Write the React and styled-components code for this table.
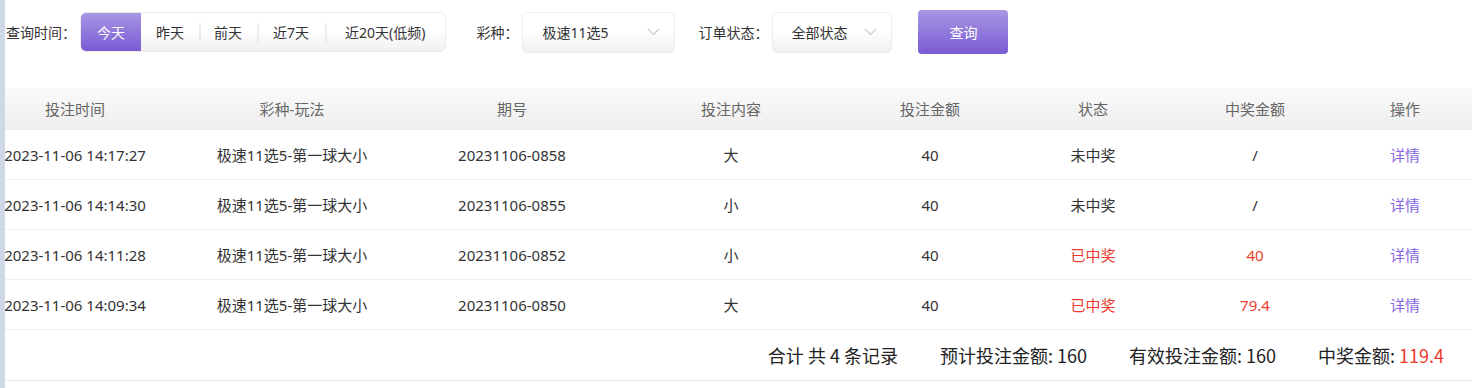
import React from 'react'
import styled, { createGlobalStyle } from 'styled-components';

const GlobalStyle = createGlobalStyle`
    html, body {
        margin: 0;
        padding: 0;
        background: #fff;
    }
    body {
        font-family: 'Noto Sans', 'Noto Sans CJK SC', sans-serif;
        font-size: 14px;
        color: #333;
    }
`;

const purple = 'linear-gradient(180deg, #a796e3 0%, #7a5bd4 100%)';
const soft = 'linear-gradient(180deg, #ffffff 0%, #ffffff 45%, #f0f0f0 100%)';
const red = '#ec3b2e';

const Page = styled.div`
    display: flex;
    height: 388px;
    overflow: hidden;
`;

const Rail = styled.div`
    flex: 0 0 5px;
    background: #cfd8e6;
`;

const Main = styled.div`
    flex: 1;
    min-width: 0;
    overflow: hidden;
`;

const FilterBar = styled.div`
    display: flex;
    align-items: center;
    height: 64px;
    padding-left: 1px;
    font-size: 14px;
`;

const Label = styled.span`
    color: #333;
    white-space: nowrap;
    font-family: 'Noto Sans CJK SC', sans-serif;
    margin-left: ${p => p.$gap || 0}px;
    margin-right: 4px;
`;

const Segment = styled.div`
    display: flex;
    height: 40px;
    border: 1px solid #ececec;
    border-radius: 6px;
    background: ${soft};
    box-sizing: border-box;
    overflow: hidden;
`;

const SegItem = styled.div`
    position: relative;
    display: flex;
    align-items: center;
    padding: 0 ${p => p.$pad || 16}px;
    color: ${p => p.$active ? '#fff' : '#333'};
    background: ${p => p.$active ? purple : 'transparent'};
    white-space: nowrap;
    &::before {
        content: '';
        display: ${p => p.$divider ? 'block' : 'none'};
        position: absolute;
        left: 0;
        top: 10px;
        height: 20px;
        width: 2px;
        background: #ececec;
    }
`;

const Select = styled.div`
    display: flex;
    align-items: center;
    justify-content: space-between;
    box-sizing: border-box;
    width: ${p => p.$w}px;
    height: 41px;
    padding: 0 14px 0 ${p => p.$pl || 18}px;
    border: 1px solid #ededed;
    border-radius: 5px;
    background: ${soft};
    color: #333;
`;

const QueryButton = styled.button`
    margin-left: 26px;
    width: 90px;
    height: 44px;
    border: none;
    border-radius: 4px;
    background: ${purple};
    color: #fff;
    font-family: 'Noto Sans CJK SC', sans-serif;
    font-size: 14px;
    cursor: pointer;
`;

const Table = styled.div`
    margin-top: 24px;
    font-size: 15px;
`;

const cols = '140px 294px 146px 292px 106px 220px 104px 196px';

const HeadRow = styled.div`
    display: grid;
    grid-template-columns: ${cols};
    height: 42px;
    background: linear-gradient(180deg, #fafafa 0%, #eeeeee 100%);
    border-bottom: 1px solid #eaeaf0;
    box-sizing: border-box;
    color: #666;
`;

const Row = styled.div`
    display: grid;
    grid-template-columns: ${cols};
    height: 50px;
    border-bottom: 1px solid #efeff3;
    box-sizing: border-box;
`;

const Cell = styled.div`
    display: flex;
    align-items: center;
    justify-content: center;
    min-width: 0;
    white-space: nowrap;
    color: ${p => p.$tone === 'red' ? red : p.$tone === 'link' ? '#8768e2' : 'inherit'};
    cursor: ${p => p.$tone === 'link' ? 'pointer' : 'default'};
`;

const Summary = styled.div`
    display: flex;
    justify-content: flex-end;
    align-items: center;
    gap: 42px;
    height: 50px;
    padding-right: 28px;
    border-bottom: 1px solid #e8e8ef;
    font-family: 'Noto Sans CJK SC', sans-serif;
    font-size: 18px;
    color: #222;
`;

const Hot = styled.span`
    color: ${red};
`;

const Chevron = () => (
    <svg width="13" height="8" viewBox="0 0 13 8" fill="none">
        <polyline points="1,1 6.5,6.5 12,1" stroke="#c9c9c9" strokeWidth="1.1" />
    </svg>
);

const headers = ['投注时间', '彩种-玩法', '期号', '投注内容', '投注金额', '状态', '中奖金额', '操作'];

const bets = [
    { time: '2023-11-06 14:17:27', issue: '20231106-0858', pick: '大', won: false, prize: '/' },
    { time: '2023-11-06 14:14:30', issue: '20231106-0855', pick: '小', won: false, prize: '/' },
    { time: '2023-11-06 14:11:28', issue: '20231106-0852', pick: '小', won: true, prize: '40' },
    { time: '2023-11-06 14:09:34', issue: '20231106-0850', pick: '大', won: true, prize: '79.4' },
];

const ranges = [
    { label: '今天', pad: 16 },
    { label: '昨天', pad: 15 },
    { label: '前天', pad: 15 },
    { label: '近7天', pad: 16 },
    { label: '近20天(低频)', pad: 20 },
];

const App = () => {
    return (
        <Page>
            <GlobalStyle />
            <Rail />
            <Main>
                <FilterBar>
                    <Label>查询时间：</Label>
                    <Segment>
                        {ranges.map((r, i) => (
                            <SegItem key={r.label} $active={i === 0} $divider={i > 1} $pad={r.pad}>{r.label}</SegItem>
                        ))}
                    </Segment>
                    <Label $gap={30}>彩种：</Label>
                    <Select $w={153} $pl={19}>极速11选5<Chevron /></Select>
                    <Label $gap={23}>订单状态：</Label>
                    <Select $w={120}>全部状态<Chevron /></Select>
                    <QueryButton>查询</QueryButton>
                </FilterBar>
                <Table>
                    <HeadRow>
                        {headers.map(h => <Cell key={h}>{h}</Cell>)}
                    </HeadRow>
                    {bets.map(b => (
                        <Row key={b.issue}>
                            <Cell>{b.time}</Cell>
                            <Cell>极速11选5-第一球大小</Cell>
                            <Cell>{b.issue}</Cell>
                            <Cell>{b.pick}</Cell>
                            <Cell>40</Cell>
                            <Cell $tone={b.won ? 'red' : ''}>{b.won ? '已中奖' : '未中奖'}</Cell>
                            <Cell $tone={b.won ? 'red' : ''}>{b.prize}</Cell>
                            <Cell $tone="link">详情</Cell>
                        </Row>
                    ))}
                </Table>
                <Summary>
                    <span>合计 共 4 条记录</span>
                    <span>预计投注金额: 160</span>
                    <span>有效投注金额: 160</span>
                    <span>中奖金额: <Hot>119.4</Hot></span>
                </Summary>
            </Main>
        </Page>
    )
}

export default App
